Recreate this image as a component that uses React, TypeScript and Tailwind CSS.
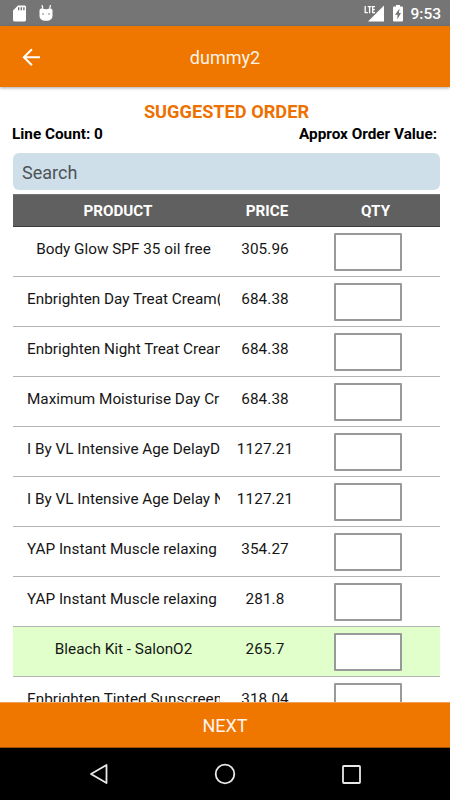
import React from "react";

type Item = { name: string; price: string; picked?: boolean; centered?: boolean };

const items: Item[] = [
  { name: "Body Glow SPF 35 oil free", price: "305.96", centered: true },
  { name: "Enbrighten Day Treat Cream(", price: "684.38" },
  { name: "Enbrighten Night Treat Cream", price: "684.38" },
  { name: "Maximum Moisturise Day Cr", price: "684.38" },
  { name: "I By VL Intensive Age DelayD", price: "1127.21" },
  { name: "I By VL Intensive Age Delay N", price: "1127.21" },
  { name: "YAP Instant Muscle relaxing", price: "354.27" },
  { name: "YAP Instant Muscle relaxing", price: "281.8" },
  { name: "Bleach Kit - SalonO2", price: "265.7", picked: true, centered: true },
  { name: "Enbrighten Tinted Sunscreen", price: "318.04" },
];

function StatusBar() {
  return (
    <div className="flex h-[26px] shrink-0 items-center bg-[#757575] pl-[13px] pr-[9px] text-white">
      <svg width="14" height="17" viewBox="0 0 14 17">
        <path d="M5 .5h6.6A1.4 1.4 0 0 1 13 1.900v13.200a1.400 1.400 0 0 1-1.400 1.400H1.400A1.400 1.400 0 0 1 0 15.100V5.500z" fill="#fff" />
        <path d="M5.700 2.300v3M8.300 2.300v3M10.900 2.300v3" stroke="#666" strokeWidth="1.300" />
      </svg>
      <svg className="ml-3" width="14" height="17" viewBox="0 0 14 17">
        <path d="M3 0l.8 3.500M11.500 0l-.8 3.500" stroke="#fff" strokeWidth="1.200" />
        <path d="M.5 5Q1.500 3 3.500 3.300Q5 4.200 7 4.200T10.500 3.300Q12.500 3 13.500 5v6a4.700 4.700 0 0 1-4.700 4.700H5.200A4.700 4.700 0 0 1 .5 11z" fill="#fff" />
        <circle cx="4" cy="9" r=".8" fill="#757575" />
        <circle cx="10" cy="9" r=".8" fill="#757575" />
      </svg>
      <svg className="ml-auto" width="20" height="17" viewBox="0 0 20 17">
        <path d="M20 .5v16H4z" fill="#fff" />
        <path d="M0 0h11.500v8.800H0z" fill="#757575" />
        <path d="M1.200 1v6.700h2.600M3.700 1.600h3.800M5.600 1.600v6.700M11 1.600H8.700v6.100H11M8.700 4.600h2.100" fill="none" stroke="#fff" strokeWidth="1.300" />
      </svg>
      <svg className="ml-[9px]" width="10" height="17" viewBox="0 0 10 17">
        <path d="M3 0h4v1.500h2a1 1 0 0 1 1 1V15.500a1 1 0 0 1-1 1H1a1 1 0 0 1-1-1v-13a1 1 0 0 1 1-1h2z" fill="#fff" />
        <path d="M6.500 3.500L2 9.800h2.400v4.400L8 8H6z" fill="#757575" />
      </svg>
      <span className="ml-[7px] mt-[3px] text-[15.500px] font-medium leading-none">9:53</span>
    </div>
  );
}

function AppBar() {
  return (
    <div className="z-10 flex h-[61px] shrink-0 items-center bg-[#ef7700] shadow-[0_1px_3px_rgba(0,0,0,0.35)]">
      <svg className="ml-[22px]" width="19" height="18" viewBox="0 0 19 18" fill="none" stroke="#fff" strokeWidth="2">
        <path d="M18 9.200H2M9.900 1.200l-8 8 8 8" />
      </svg>
      <h1 className="ml-[41px] w-[286px] pt-[2px] text-center text-[18px] leading-none text-[#fff3e8]">dummy2</h1>
    </div>
  );
}

function Row({ item }: { item: Item }) {
  return (
    <div className={`flex h-[50px] shrink-0 border-b border-[#b4b4b4] ${item.picked ? "bg-[#e0ffca]" : "bg-white"}`}>
      <div className="ml-[14px] flex h-[44px] w-[193px] items-center overflow-hidden text-[15.300px]">
        <span className={`whitespace-nowrap ${item.centered ? "mx-auto" : ""}`}>{item.name}</span>
      </div>
      <div className="flex h-[44px] w-[90px] items-center justify-center text-[15.300px] tracking-[0.1px]">{item.price}</div>
      <div className="ml-[24px] mt-[6px] h-[38px] w-[68px] rounded-[1px] border-2 border-[#999] bg-white" />
    </div>
  );
}

export default function App() {
  return (
    <div className="flex h-[800px] w-[450px] flex-col overflow-hidden bg-white font-['Roboto',sans-serif] text-[#161616]">
      <StatusBar />
      <AppBar />
      <div className="flex h-[615px] shrink-0 flex-col overflow-hidden pl-[13px] pr-[10px]">
        <h2 className="mt-[15px] text-center text-[18.200px] font-bold leading-[19px] text-[#ed7100]">SUGGESTED ORDER</h2>
        <div className="mt-px flex justify-between pr-[3px] text-[15.300px] font-bold leading-[24px] text-black">
          <span className="-ml-px">Line Count: 0</span>
          <span>Approx Order Value:</span>
        </div>
        <div className="mt-[7px] flex h-[37px] shrink-0 items-center rounded-[6px] bg-[#cfdfe9] pl-[9px] pt-[2px] text-[18px] text-[#4c5357]">Search</div>
        <div className="mt-[4px] flex h-[33px] shrink-0 items-center border-b border-t border-b-[#3c3c3c] border-t-[#777] bg-[#606060] pt-[2px] text-[15.200px] font-bold text-white">
          <span className="w-[210px] text-center">PRODUCT</span>
          <span className="w-[88px] text-center">PRICE</span>
          <span className="w-[129px] text-center">QTY</span>
        </div>
        {items.map((item, i) => (
          <Row key={i} item={item} />
        ))}
      </div>
      <div className="flex h-[46px] shrink-0 items-center justify-center border-b border-t border-b-[#a35200] border-t-[#f2a158] bg-[#ef7700] text-[18px] text-[#fff3f0]">NEXT</div>
      <div className="flex h-[52px] shrink-0 items-center bg-black pl-[89px]">
        <svg width="19" height="22" viewBox="0 0 19 22" fill="none" stroke="#e8e8e8" strokeWidth="1.800" strokeLinejoin="round">
          <path d="M17.500 2v18L2 11z" />
        </svg>
        <svg className="ml-[106px]" width="22" height="22" viewBox="0 0 22 22" fill="none" stroke="#e8e8e8" strokeWidth="1.800">
          <circle cx="11" cy="11" r="9.300" />
        </svg>
        <svg className="ml-[106px]" width="19" height="19" viewBox="0 0 19 19" fill="none" stroke="#e8e8e8" strokeWidth="1.800">
          <rect x="1" y="1" width="17" height="17" rx=".8" />
        </svg>
      </div>
    </div>
  );
}
